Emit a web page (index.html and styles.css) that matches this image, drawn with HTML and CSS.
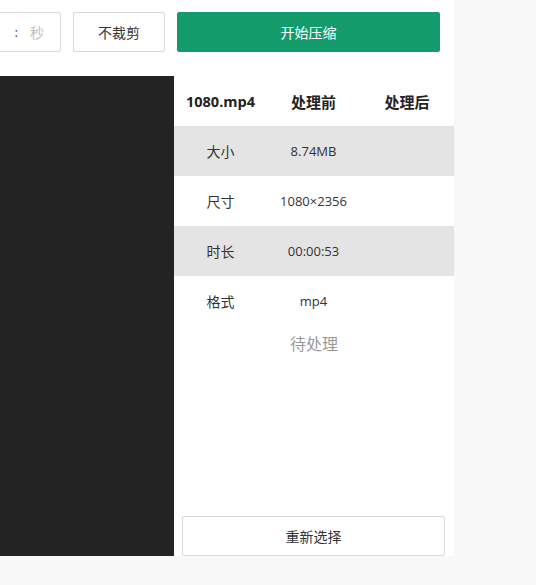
FILE: index.html
```html
<!DOCTYPE html>
<html lang="zh-CN">
<head>
<meta charset="utf-8">
<title>视频压缩</title>
<link rel="stylesheet" href="styles.css">
</head>
<body>
<div class="page">
  <div class="toolbar">
    <div class="time-input"><span class="colon">:</span><span class="sec">秒</span></div>
    <button class="btn btn-plain">不裁剪</button>
    <button class="btn btn-primary">开始压缩</button>
  </div>
  <div class="workspace">
    <div class="preview"></div>
    <div class="info">
      <div class="row head">
        <div class="cell name">1080.mp4</div>
        <div class="cell">处理前</div>
        <div class="cell">处理后</div>
      </div>
      <div class="row alt">
        <div class="cell label">大小</div>
        <div class="cell">8.74MB</div>
        <div class="cell"></div>
      </div>
      <div class="row">
        <div class="cell label">尺寸</div>
        <div class="cell">1080×2356</div>
        <div class="cell"></div>
      </div>
      <div class="row alt">
        <div class="cell label">时长</div>
        <div class="cell">00:00:53</div>
        <div class="cell"></div>
      </div>
      <div class="row">
        <div class="cell label">格式</div>
        <div class="cell">mp4</div>
        <div class="cell"></div>
      </div>
      <div class="status">待处理</div>
      <button class="btn btn-plain reselect">重新选择</button>
    </div>
  </div>
</div>
</body>
</html>
```

FILE: styles.css
```css
html, body {
  margin: 0;
  padding: 0;
}
body {
  background: #f8f8f8;
  font-family: "Open Sans", "Noto Sans CJK SC", sans-serif;
  color: #333;
  width: 536px;
  height: 585px;
  overflow: hidden;
}
.page {
  width: 454px;
  height: 556px;
  background: #fff;
  display: flex;
  flex-direction: column;
}
.toolbar {
  display: flex;
  gap: 12px;
  padding-top: 12px;
  height: 40px;
}
.time-input {
  margin-left: -40px;
  width: 101px;
  height: 40px;
  box-sizing: border-box;
  border: 1px solid #dcdcdc;
  border-radius: 2px;
  display: flex;
  align-items: center;
  justify-content: flex-end;
  padding-right: 16px;
  font-size: 14px;
  flex-shrink: 0;
}
.colon {
  color: #2b3a8a;
  margin-right: 12px;
  font-size: 13px;
}
.sec {
  color: #c0c0c0;
}
.btn {
  font-family: "Open Sans", "Noto Sans CJK SC", sans-serif;
  font-size: 14px;
  height: 40px;
  border-radius: 2px;
  padding: 0;
  cursor: pointer;
  flex-shrink: 0;
}
.btn-plain {
  width: 92px;
  background: #fff;
  border: 1px solid #d9d9d9;
  color: #333;
}
.btn-primary {
  width: 263px;
  background: #139b6c;
  border: 1px solid #139b6c;
  color: #fff;
}
.workspace {
  display: flex;
  margin-top: 24px;
  flex: 1;
}
.preview {
  width: 174px;
  background: #232323;
}
.info {
  width: 280px;
  display: flex;
  flex-direction: column;
}
.row {
  display: grid;
  grid-template-columns: 93px 93px 94px;
  height: 50px;
  align-items: center;
  font-size: 13px;
}
.row.alt {
  background: #e4e4e4;
}
.row.head {
  font-size: 15px;
  font-weight: 700;
  color: #222;
}
.row.head .name {
  font-size: 14.5px;
}
.cell {
  text-align: center;
}
.cell.label {
  font-size: 14px;
}
.status {
  margin-top: 6px;
  line-height: 24px;
  text-align: center;
  font-size: 16px;
  color: #999;
}
.reselect {
  margin: auto 9px 0 8px;
  width: 263px;
}
```
